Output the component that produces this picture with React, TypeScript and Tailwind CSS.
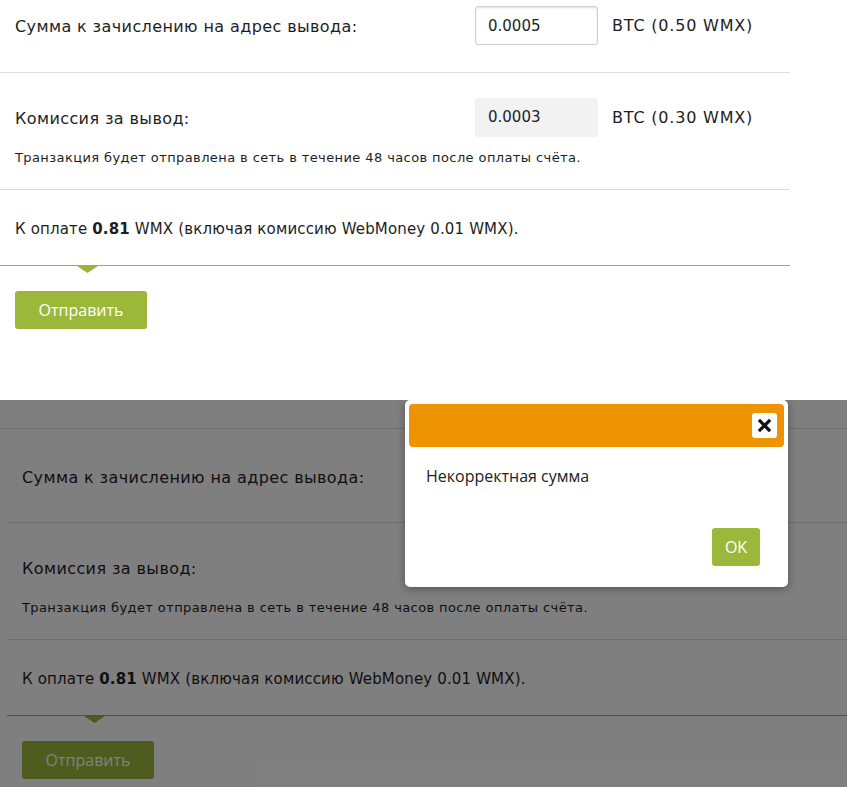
import React from 'react';

const labelFont = { fontFamily: '"DejaVu Sans", Verdana, sans-serif' };
const uiFont = { fontFamily: '"Open Sans", "Noto Sans", sans-serif' };

function Form({ full }: { full: boolean }) {
  return (
    <div className="text-[#1e1e1e]" style={labelFont}>
      {/* amount row */}
      <div className={full ? 'pt-[28px] pb-[26px] border-b border-[#dcdcdc] px-[15px]' : 'pt-[6px] pb-[27px] border-b border-[#dcdcdc] px-[15px]'}>
        <div className="flex items-center h-[39px]">
          <div className="w-[460px] text-[16px] tracking-[0.4px] pt-[2px]">Сумма к зачислению на адрес вывода:</div>
          <input
            readOnly
            value="0.0005"
            className="w-[123px] h-[39px] border border-[#cfcfcf] rounded-[3px] bg-white px-[12px] text-[15px] text-[#1e1e1e] shadow-[inset_0_1px_2px_rgba(0,0,0,0.12)] outline-none"
            style={labelFont}
          />
          <div className="ml-[14px] text-[16px] tracking-[0.8px]">BTC (0.50 WMX)</div>
        </div>
      </div>

      {/* fee row */}
      <div className="pt-[25px] pb-[22px] border-b border-[#dcdcdc] px-[15px]">
        <div className="flex items-center h-[39px]">
          <div className="w-[460px] text-[16px] tracking-[0.4px] pt-[2px]">Комиссия за вывод:</div>
          <div className="w-[123px] h-[39px] rounded-[3px] bg-[#f2f2f2] px-[13px] text-[15px] flex items-center">0.0003</div>
          <div className="ml-[14px] text-[16px] tracking-[0.8px]">BTC (0.30 WMX)</div>
        </div>
        <div className="mt-[12px] text-[13px] leading-[18px] tracking-[0.4px]">
          Транзакция будет отправлена в сеть в течение 48 часов после оплаты счёта.
        </div>
      </div>

      {/* total row */}
      <div className="pt-[29px] pb-[26px] px-[15px] text-[15px] leading-[20px] tracking-[0.15px]">
        К оплате <b>0.81</b> WMX (включая комиссию WebMoney 0.01 WMX).
      </div>

      <div className="h-px bg-[#9db33f]" />
      <div className="pl-[77px] h-0">
        <svg width="21" height="7" viewBox="0 0 21 7" className="block">
          <path d="M0 0 L21 0 L10.5 7 Z" fill="#9db33f" />
        </svg>
      </div>

      <div className="px-[15px] pt-[25px]">
        <button className="w-[132px] h-[38px] rounded-[3px] bg-[#9cb83b] text-white text-[16px]" style={uiFont}>
          Отправить
        </button>
      </div>
    </div>
  );
}

export default function App() {
  return (
    <div className="w-[847px] bg-white overflow-hidden">
      {/* plain form */}
      <div className="h-[400px] w-[790px]">
        <Form full={false} />
      </div>

      {/* same form under the alert */}
      <div className="relative h-[387px] overflow-hidden">
        <div className="h-[29px] border-b border-[#dcdcdc]" />
        <div className="ml-[7px]">
          <Form full={true} />
        </div>

        <div className="absolute inset-0 bg-black/50" />

        <div className="absolute left-[405px] top-0 w-[383px] h-[187px] bg-white rounded-[5px] shadow-[0_2px_8px_rgba(0,0,0,0.35)] p-[4px]">
          <div className="h-[43px] bg-[#ee9402] rounded-[4px] flex items-center justify-end pr-[7px]">
            <div className="w-[25px] h-[25px] bg-white rounded-[3px] flex items-center justify-center">
              <svg width="13" height="13" viewBox="0 0 13 13">
                <path d="M2 2 L11 11 M11 2 L2 11" stroke="#111" strokeWidth="3.2" strokeLinecap="square" />
              </svg>
            </div>
          </div>
          <div className="pl-[17px] pt-[19px] text-[16px] text-[#222] leading-[20px]" style={uiFont}>
            Некорректная сумма
          </div>
          <div className="flex justify-end pr-[24px] pt-[42px]">
            <button className="w-[48px] h-[38px] rounded-[3px] bg-[#9cb83b] text-white text-[16px]" style={uiFont}>
              OK
            </button>
          </div>
        </div>
      </div>
    </div>
  );
}
